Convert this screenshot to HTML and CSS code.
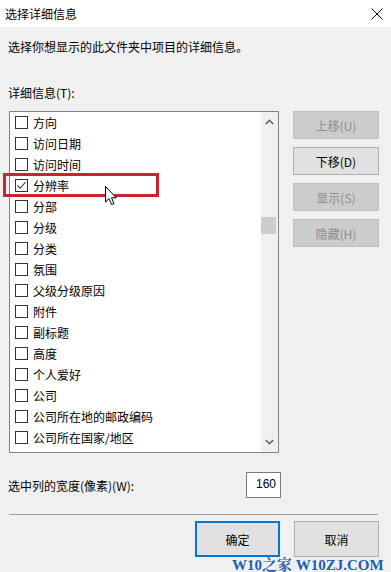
FILE: index.html
```html
<!DOCTYPE html>
<html lang="zh">
<head>
<meta charset="utf-8">
<link rel="stylesheet" href="styles.css">
</head>
<body>
<div class="window">
  <div class="titlebar">
    <span class="title">选择详细信息</span>
    <svg class="close" width="12" height="12" viewBox="0 0 12 12"><path d="M0.5 0.5L11.5 11.5M11.5 0.5L0.5 11.5" stroke="#000" stroke-width="1" fill="none"/></svg>
  </div>
  <div class="content">
    <p class="desc">选择你想显示的此文件夹中项目的详细信息。</p>
    <p class="label">详细信息(T):</p>
    <div class="main">
      <div class="listbox">
        <ul class="items">
          <li><span class="cb"></span>方向</li>
          <li><span class="cb"></span>访问日期</li>
          <li><span class="cb"></span>访问时间</li>
          <li><span class="cb checked"><svg width="11" height="11" viewBox="0 0 11 11"><path d="M1.5 5.5L4.2 8.3L9.5 2" stroke="#333" stroke-width="1.1" fill="none"/></svg></span>分辨率</li>
          <li><span class="cb"></span>分部</li>
          <li><span class="cb"></span>分级</li>
          <li><span class="cb"></span>分类</li>
          <li><span class="cb"></span>氛围</li>
          <li><span class="cb"></span>父级分级原因</li>
          <li><span class="cb"></span>附件</li>
          <li><span class="cb"></span>副标题</li>
          <li><span class="cb"></span>高度</li>
          <li><span class="cb"></span>个人爱好</li>
          <li><span class="cb"></span>公司</li>
          <li><span class="cb"></span>公司所在地的邮政编码</li>
          <li><span class="cb"></span>公司所在国家/地区</li>
        </ul>
        <div class="scrollbar">
          <svg class="arrow" width="9" height="6" viewBox="0 0 9 6"><path d="M0.8 5L4.5 1.3L8.2 5" stroke="#606060" stroke-width="1.6" fill="none"/></svg>
          <div class="track"><div class="thumb"></div></div>
          <svg class="arrow" width="9" height="6" viewBox="0 0 9 6"><path d="M0.8 1L4.5 4.7L8.2 1" stroke="#606060" stroke-width="1.6" fill="none"/></svg>
        </div>
      </div>
      <div class="sidebtns">
        <button class="btn disabled">上移(U)</button>
        <button class="btn">下移(D)</button>
        <button class="btn disabled">显示(S)</button>
        <button class="btn disabled">隐藏(H)</button>
      </div>
    </div>
    <div class="widthrow">
      <span class="wlabel">选中列的宽度(像素)(W):</span>
      <span class="wbox">160</span>
    </div>
    <div class="sep"></div>
    <div class="footer">
      <button class="btn big default">确定</button>
      <button class="btn big">取消</button>
    </div>
  </div>
  <div class="highlight"></div>
  <svg class="cursor" width="13" height="20" viewBox="0 0 13 20"><path d="M0.5 0.5L0.5 16L4 12.6L6.6 18.6L9 17.6L6.5 11.8L11.3 11.8Z" fill="#fff" stroke="#000" stroke-width="1"/></svg>
  <div class="watermark">W10之家 W10ZJ.COM</div>
</div>
</body>
</html>
```
FILE: styles.css
```css
* { box-sizing: border-box; }
html, body { margin: 0; padding: 0; }
body {
  width: 391px;
  height: 572px;
  overflow: hidden;
  font-family: "Noto Sans CJK SC", "Liberation Sans", sans-serif;
  font-size: 12px;
  color: #000;
  background: #f0f0f0;
}
.window { position: relative; width: 391px; height: 572px; }
.titlebar {
  height: 27px;
  background: #fff;
  display: flex;
  align-items: center;
  justify-content: space-between;
  padding: 0 8px 0 5px;
}
.title { font-size: 12px; line-height: 14px; }
.close { display: block; }
.content { padding: 0 0 0 8px; }
.desc { margin: 0; padding-top: 12px; line-height: 16px; height: 28px; }
.label { margin: 0; padding-top: 30px; line-height: 16px; height: 56px; }
.main { display: flex; margin-left: 1px; }
.listbox {
  width: 270px;
  height: 342px;
  border: 1px solid #828282;
  background: #fff;
  display: flex;
}
.items {
  list-style: none;
  margin: 0;
  padding: 0;
  flex: 1;
  overflow: hidden;
}
.items li {
  height: 21px;
  display: flex;
  align-items: center;
  padding-left: 5px;
  line-height: 21px;
  white-space: nowrap;
}
.cb {
  width: 13px;
  height: 13px;
  border: 1px solid #333;
  background: #fff;
  margin-right: 5px;
  display: flex;
  align-items: center;
  justify-content: center;
  flex: none;
}
.cb svg { display: block; }
.scrollbar {
  width: 17px;
  background: #f0f0f0;
  display: flex;
  flex-direction: column;
  align-items: center;
}
.arrow { display: block; margin: 7px 0; flex: none; }
.track { flex: 1; width: 100%; padding-top: 85px; }
.thumb { width: 15px; height: 17px; margin-left: 0; background: #cdcdcd; }
.sidebtns {
  display: flex;
  flex-direction: column;
  gap: 8px;
  margin-left: 14px;
}
.btn {
  font-family: inherit;
  font-size: 12px;
  width: 86px;
  height: 28px;
  background: #e1e1e1;
  border: 1px solid #adadad;
  color: #000;
  padding: 0;
  margin: 0;
}
.btn.disabled { background: #cccccc; border-color: #bfbfbf; color: #8d8d8d; }
.widthrow {
  display: flex;
  align-items: center;
  justify-content: space-between;
  margin-top: 19px;
  width: 273px;
  height: 26px;
}
.wbox {
  width: 35px;
  height: 26px;
  background: #fff;
  border: 1px solid #7a7a7a;
  text-align: right;
  padding-right: 4px;
  line-height: 22px;
  font-family: "Liberation Sans", sans-serif;
}
.sep {
  margin-top: 16px;
  margin-left: 1px;
  width: 369px;
  height: 1px;
  background: #a0a0a0;
}
.footer {
  display: flex;
  gap: 14px;
  margin-top: 6px;
  padding-left: 187px;
}
.btn.big { width: 85px; height: 36px; }
.btn.default { border: 2px solid #0078d7; }
.highlight {
  position: absolute;
  left: 3px;
  top: 173px;
  width: 156px;
  height: 24px;
  border: 3px solid #c9242b;
}
.cursor { position: absolute; left: 105px; top: 186px; }
.watermark {
  position: absolute;
  left: 232px;
  top: 557px;
  font-family: "Liberation Serif", "Noto Serif CJK SC", serif;
  font-weight: bold;
  font-size: 15px;
  line-height: 17px;
  color: #1d5db5;
  white-space: nowrap;
}
```
